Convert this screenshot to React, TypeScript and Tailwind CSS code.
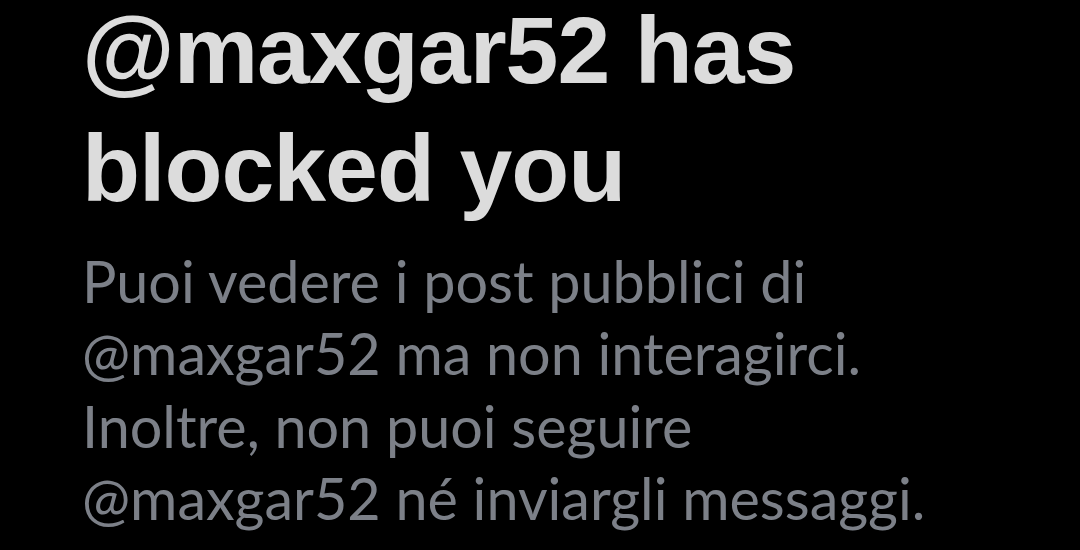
export default function App() {
  return (
    <div className="w-[1080px] h-[550px] overflow-hidden bg-black">
      <div className="pl-[82px] pr-6">
        <h1 className="text-[95px] font-bold tracking-[-1px] text-[#dcdcdc] font-['Liberation_Sans',Arial,sans-serif]">
          <span className="block leading-[100px]">@maxgar52 has</span>
          <span className="block mt-[9px] leading-[119px]">blocked you</span>
        </h1>
        <p className="mt-[17px] text-[57.5px] leading-[72.3px] text-[#7c8088] font-['Lato','Noto_Sans',sans-serif]">
          Puoi vedere i post pubblici di
          <br />
          @maxgar52 ma non interagirci.
          <br />
          Inoltre, non puoi seguire
          <br />
          @maxgar52 né inviargli messaggi.
        </p>
      </div>
    </div>
  );
}
